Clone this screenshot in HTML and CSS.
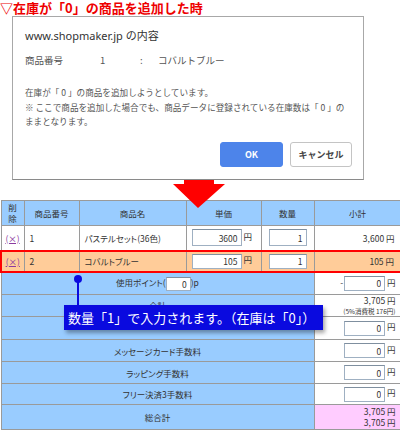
FILE: index.html
```html
<!DOCTYPE html>
<html lang="ja">
<head>
<meta charset="utf-8">
<title>在庫0の商品を追加</title>
<link rel="stylesheet" href="styles.css">
</head>
<body>
<div class="page">
  <h1 class="caption">▽在庫が「0」の商品を追加した時</h1>

  <div class="dialog">
    <div class="dlg-title">www.shopmaker.jp の内容</div>
    <div class="dlg-item"><span class="k">商品番号</span><span class="n">1</span><span class="c">:</span><span class="v">コバルトブルー</span></div>
    <p class="dlg-msg">在庫が「 0 」の商品を追加しようとしています。<br>※ ここで商品を追加した場合でも、商品データに登録されている在庫数は「 0 」の<br>ままとなります。</p>
    <div class="dlg-buttons">
      <button class="btn ok" type="button">OK</button>
      <button class="btn cancel" type="button">キャンセル</button>
    </div>
  </div>

  <div class="gap"></div>

  <table class="cart">
    <colgroup>
      <col class="c-del"><col class="c-no"><col class="c-name"><col class="c-price"><col class="c-qty"><col class="c-sub">
    </colgroup>
    <tr class="head">
      <th>削<br>除</th>
      <th>商品番号</th>
      <th>商品名</th>
      <th>単価</th>
      <th>数量</th>
      <th>小計</th>
    </tr>
    <tr class="item">
      <td class="del"><a href="#">(×)</a></td>
      <td class="no">1</td>
      <td class="name">パステルセット(36色)</td>
      <td class="price"><input class="box w50" value="3600"> 円</td>
      <td class="qty"><input class="box w38" value="1"></td>
      <td class="sub">3,600 円</td>
    </tr>
    <tr class="item hl">
      <td class="del"><a href="#">(×)</a></td>
      <td class="no">2</td>
      <td class="name">コバルトブルー</td>
      <td class="price"><input class="box w50 short" value="105"> 円</td>
      <td class="qty"><input class="box w38 short" value="1"></td>
      <td class="sub">105 円</td>
    </tr>
    <tr class="sum r23">
      <td class="label" colspan="5">使用ポイント(<input class="box w25" value="0">)p</td>
      <td class="val">-<input class="box w41" value="0"> 円</td>
    </tr>
    <tr class="sum r22">
      <td class="label" colspan="5"><span class="peek">合計</span></td>
      <td class="val total">3,705 円<br><span class="tax">(5%消費税 176円)</span></td>
    </tr>
    <tr class="sum r23">
      <td class="label" colspan="5"></td>
      <td class="val"><input class="box w41" value="0"> 円</td>
    </tr>
    <tr class="sum r22">
      <td class="label" colspan="5">メッセージカード手数料</td>
      <td class="val"><input class="box w41" value="0"> 円</td>
    </tr>
    <tr class="sum r22">
      <td class="label" colspan="5">ラッピング手数料</td>
      <td class="val"><input class="box w41" value="0"> 円</td>
    </tr>
    <tr class="sum r21">
      <td class="label" colspan="5">フリー決済3手数料</td>
      <td class="val"><input class="box w41" value="0"> 円</td>
    </tr>
    <tr class="sum r25">
      <td class="label" colspan="5">総合計</td>
      <td class="val grand">3,705 円<br>3,705 円</td>
    </tr>
  </table>

  <svg class="arrow" width="56" height="31" viewBox="0 0 56 31" aria-hidden="true">
    <polygon points="12,1 42,1 42,5 53,5 26,29 1,5 12,5" fill="#ff0000"/>
  </svg>

  <div class="pin"><span class="pin-dot"></span><span class="pin-line"></span></div>
  <div class="callout">数量「1」で入力されます。（在庫は「0」）</div>
</div>
</body>
</html>
```
FILE: styles.css
```css
* { box-sizing: border-box; }
html, body { margin: 0; padding: 0; background: #fff; }
body { font-family: "Noto Sans CJK JP", "Noto Sans", sans-serif; color: #333; }

.page { position: relative; width: 400px; height: 430px; overflow: hidden; }

.caption {
  margin: 0;
  height: 16px;
  font-size: 13px;
  line-height: 16px;
  font-weight: bold;
  color: #ee0000;
  font-family: "Noto Sans CJK JP", sans-serif;
}

/* dialog */
.dialog {
  margin-left: 12px;
  width: 352px;
  height: 164px;
  border: 1px solid #a8a8a8;
  border-bottom-color: #8a8a8a;
  padding: 12px 11px 0 12px;
  background: #fff;
}
.dlg-title {
  font-family: "Noto Sans", "Noto Sans CJK JP", sans-serif;
  font-size: 11px;
  line-height: 14px;
  color: #333;
}
.dlg-item {
  margin-top: 10px;
  font-size: 9.5px;
  line-height: 14px;
  color: #555;
  display: flex;
}
.dlg-item .k { width: 75px; }
.dlg-item .n { width: 40px; }
.dlg-item .c { width: 18px; }
.dlg-msg {
  margin: 18px 0 0;
  font-size: 8.6px;
  line-height: 14.5px;
  color: #555;
}
.dlg-buttons {
  margin-top: 13px;
  display: flex;
  justify-content: flex-end;
  gap: 7px;
}
.btn {
  height: 25px;
  border-radius: 3px;
  font-family: "Noto Sans CJK JP", sans-serif;
  font-size: 9px;
  font-weight: bold;
  padding: 0;
}
.btn.ok { width: 63px; background: #4d84ea; border: 1px solid #4d84ea; color: #fff; }
.btn.cancel { width: 62px; background: #fff; border: 1px solid #c4c4c4; color: #444; }

.gap { height: 20px; }

/* cart table */
.cart {
  width: 400px;
  border-collapse: collapse;
  table-layout: fixed;
  font-size: 8.5px;
  font-feature-settings: "palt";
  color: #333;
}
.c-del { width: 23px; }
.c-no { width: 55px; }
.c-name { width: 107px; }
.c-price { width: 75px; }
.c-qty { width: 53px; }
.c-sub { width: 87px; }

.cart th, .cart td {
  border: 1px solid #9a9a9a;
  padding: 0;
  vertical-align: middle;
}
.cart th { background: #99ccff; font-weight: normal; text-align: center; line-height: 11px; }
.head { height: 25px; }
.item { height: 25px; }
.item.hl { height: 21px; background: #ffcc99; }
.item.hl td { border-top: 2px solid #ff0000; border-bottom: 2px solid #ff0000; }
.item.hl td:first-child { border-left: 2px solid #ff0000; }
.item.hl td:last-child { border-right: 2px solid #ff0000; }

.del { text-align: center; }
.del a { color: #8a3aa0; text-decoration: underline; }
.no { padding-left: 5px !important; }
.name { padding-left: 5px !important; }
.price { padding-left: 5px !important; }
.qty { text-align: center; }
.sub { text-align: right; padding-right: 6px !important; }

.box {
  height: 17px;
  border: 1px solid #9fb0c2;
  border-top-color: #7f8f9f;
  background: #fff;
  font-family: "Noto Sans CJK JP", sans-serif;
  font-size: 8.5px;
  text-align: right;
  padding: 0 3px 0 0;
  vertical-align: middle;
  color: #333;
}
.box.short { height: 15px; }
.w50 { width: 50px; }
.w38 { width: 38px; }
.w25 { width: 25px; height: 14px; }
.w41 { width: 41px; height: 15px; margin-left: 1px; }

.sum .label { background: #99ccff; text-align: center; }
.sum .val { background: #fff; text-align: right; padding-right: 5px; }
.peek { display: inline-block; line-height: 10px; margin-bottom: 3px; }
.r23 { height: 23px; }
.r22 { height: 22px; }
.r21 { height: 21px; }
.r25 { height: 25px; }
.total { line-height: 10px; }
.tax { font-size: 6.5px; }
.grand { background: #ffccff !important; line-height: 11px; }

/* overlays */
.arrow { position: absolute; left: 172px; top: 179px; }

.pin { position: absolute; left: 74px; top: 275px; width: 8px; height: 31px; }
.pin-dot { position: absolute; left: 0; top: 0; width: 8px; height: 8px; border-radius: 50%; background: #0a0adf; }
.pin-line { position: absolute; left: 3px; top: 4px; width: 2px; height: 27px; background: #0a0adf; }

.callout {
  position: absolute;
  left: 64px;
  top: 305px;
  width: 259px;
  height: 25px;
  background: #0a0adf;
  color: #fff;
  font-size: 13px;
  line-height: 25px;
  padding-left: 4px;
  white-space: nowrap;
  box-shadow: 2px 3px 4px rgba(0, 0, 0, 0.35);
  font-family: "Noto Sans CJK JP", sans-serif;
}
```
